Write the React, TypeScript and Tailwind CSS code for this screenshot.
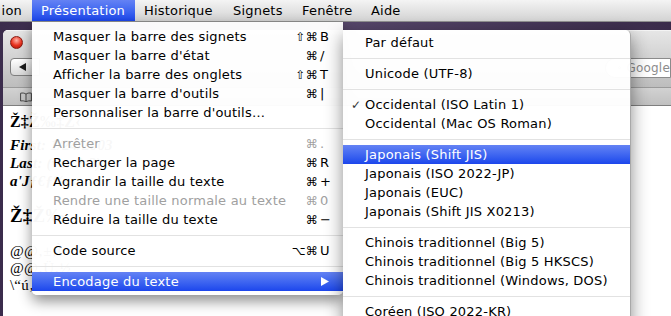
import React from "react";

type Row =
  | { label: string; mods?: string; k?: string; disabled?: boolean; sub?: boolean; active?: boolean; check?: boolean }
  | "sep";

const mainItems: Row[] = [
  { label: "Masquer la barre des signets", mods: "⇧⌘", k: "B" },
  { label: "Masquer la barre d'état", mods: "⌘", k: "/" },
  { label: "Afficher la barre des onglets", mods: "⇧⌘", k: "T" },
  { label: "Masquer la barre d'outils", mods: "⌘", k: "|" },
  { label: "Personnaliser la barre d'outils…" },
  "sep",
  { label: "Arrêter", mods: "⌘", k: ".", disabled: true },
  { label: "Recharger la page", mods: "⌘", k: "R" },
  { label: "Agrandir la taille du texte", mods: "⌘", k: "+" },
  { label: "Rendre une taille normale au texte", mods: "⌘", k: "0", disabled: true },
  { label: "Réduire la taille du texte", mods: "⌘", k: "−" },
  "sep",
  { label: "Code source", mods: "⌥⌘", k: "U" },
  "sep",
  { label: "Encodage du texte", sub: true, active: true },
];

const subItems: Row[] = [
  { label: "Par défaut" },
  "sep",
  { label: "Unicode (UTF-8)" },
  "sep",
  { label: "Occidental (ISO Latin 1)", check: true },
  { label: "Occidental (Mac OS Roman)" },
  "sep",
  { label: "Japonais (Shift JIS)", active: true },
  { label: "Japonais (ISO 2022-JP)" },
  { label: "Japonais (EUC)" },
  { label: "Japonais (Shift JIS X0213)" },
  "sep",
  { label: "Chinois traditionnel (Big 5)" },
  { label: "Chinois traditionnel (Big 5 HKSCS)" },
  { label: "Chinois traditionnel (Windows, DOS)" },
  "sep",
  { label: "Coréen (ISO 2022-KR)" },
];

const highlight = "bg-gradient-to-b from-[#6482f4] to-[#1c45ec] text-white";

function Separator() {
  return (
    <div className="h-[12px] flex items-center">
      <div className="h-px w-full bg-[#e2e2e2]" />
    </div>
  );
}

function MenuBar() {
  const titles = [
    { t: "Historique", w: "w-[89px]" },
    { t: "Signets", w: "w-[69px]" },
    { t: "Fenêtre", w: "w-[69px]" },
    { t: "Aide", w: "w-[60px]" },
  ];
  return (
    <div className="h-[22px] flex items-stretch bg-gradient-to-b from-[#f4f4f4] to-[#d3d3d3] border-b border-[#8f8f8f]">
      <div className="w-[32px] flex items-center justify-end pr-[10px]">ion</div>
      <div className={`w-[103px] flex items-center pl-[9px] ${highlight}`}>Présentation</div>
      {titles.map((m) => (
        <div key={m.t} className={`${m.w} flex items-center pl-[9px]`}>
          {m.t}
        </div>
      ))}
    </div>
  );
}

function Window() {
  return (
    <div className="flex-1 pl-[3px] pt-[8px] bg-gradient-to-r from-[#3b2c4c] via-[#58486c] to-[#3a2b4a]">
      <div className="h-full flex flex-col bg-white rounded-tl-[5px] overflow-hidden">
        <div className="h-[57px] flex flex-col bg-gradient-to-b from-[#e6e6e6] to-[#bdbdbd] border-t border-[#f4f4f4]">
          <div className="h-[23px] flex items-center pl-[7px]">
            <div className="w-[13px] h-[13px] rounded-full border border-[#8a1b12] bg-[radial-gradient(circle_at_50%_30%,#ffb3a8,#e8321f_55%,#a0140a)]" />
          </div>
          <div className="flex items-start pt-[4px] pl-[7px]">
            <div className="w-[30px] h-[18px] rounded-l-[4px] border border-[#7f7f7f] bg-gradient-to-b from-[#ffffff] to-[#d8d8d8] flex items-center pl-[8px]">
              <svg width="7" height="8" viewBox="0 0 7 8">
                <polygon points="0,4 7,0 7,8" fill="#1a1a1a" />
              </svg>
            </div>
            <div className="ml-auto w-[66px] h-[20px] rounded-l-full border border-[#8b8b8b] bg-white flex items-center pl-[12px] gap-[5px] text-[12px] text-[#8c8c8c]">
              <svg width="10" height="10" viewBox="0 0 10 10" fill="none" stroke="#777" strokeWidth="1.4">
                <circle cx="4" cy="4" r="3" />
                <path d="M6.2 6.2 9 9" />
              </svg>
              <span>Google</span>
            </div>
          </div>
        </div>
        <div className="h-[19px] flex items-center pl-[17px] bg-gradient-to-b from-[#d2d2d2] to-[#c0c0c0] border-t border-[#9a9a9a] border-b border-b-[#7e7e7e]">
          <svg width="12" height="10" viewBox="0 0 12 10" fill="none" stroke="#444" strokeWidth="1">
            <path d="M6 2.2C4.6 1 2.6.8.6 1.2V9c2-.4 4-.2 5.4 1 1.4-1.2 3.4-1.4 5.4-1V1.2C9.4.8 7.4 1 6 2.2Z" />
            <path d="M6 2.2V10" />
          </svg>
        </div>
        <div className="flex-1 pl-[7px] pt-[6px] font-['Liberation_Serif',serif] text-black whitespace-nowrap">
          <div className="text-[16px] leading-[20px] font-bold">Ž‡Ž‰‡Ž‹</div>
          <div className="mt-[4px] text-[15px] leading-[18px] italic font-bold">
            <div>First: 1/24/2003</div>
            <div>Last: (ver 2-3)</div>
            <div>a'Jƒ€ƒ‰</div>
          </div>
          <div className="mt-[14px] text-[19px] leading-[24px] font-bold">Ž‡Ž‰</div>
          <div className="mt-[15px] text-[15px] leading-[17px]">
            <div>@@‚±‚Ì</div>
            <div>@@‚Ü‚½</div>
            <div>\“ú‚,‚,‚,‚,‚,‚,‚,‚,‚,‚,‚,‚,‚,‚,‚,‚,‚,‚,‚,</div>
          </div>
        </div>
      </div>
    </div>
  );
}

function MainMenu() {
  return (
    <div className="absolute left-[32px] top-[22px] w-[311px] pt-[5px] pb-[4px] bg-white/[0.97] rounded-b-[5px] shadow-[0_6px_14px_rgba(0,0,0,0.45)]">
      {mainItems.map((it, i) =>
        it === "sep" ? (
          <Separator key={i} />
        ) : (
          <div
            key={i}
            className={`h-[19px] flex items-center pl-[21px] pr-[13px] ${it.active ? highlight : ""} ${
              it.disabled ? "text-[#a0a0a0]" : ""
            }`}
          >
            <span className="flex-1">{it.label}</span>
            {it.k && (
              <span className="flex items-center">
                <span className="text-[12px]">{it.mods}</span>
                <span className="w-[12px] pl-[2px]">{it.k}</span>
              </span>
            )}
            {it.sub && (
              <svg width="8" height="9" viewBox="0 0 8 9" className="mr-[1px]">
                <polygon points="0,0 8,4.5 0,9" fill="#ffffff" />
              </svg>
            )}
          </div>
        )
      )}
    </div>
  );
}

function SubMenu() {
  return (
    <div className="absolute left-[343px] top-[30px] w-[288px] h-[300px] pt-[3px] bg-white/[0.97] rounded-tr-[5px] border-r border-[#a8a8a8] shadow-[0_6px_18px_rgba(0,0,0,0.45)]">
      {subItems.map((it, i) =>
        it === "sep" ? (
          <Separator key={i} />
        ) : (
          <div key={i} className={`h-[19px] flex items-center pl-[8px] ${it.active ? highlight : ""}`}>
            <span className="w-[14px] text-[12px] text-[#333]">{it.check ? "✓" : ""}</span>
            <span>{it.label}</span>
          </div>
        )
      )}
    </div>
  );
}

export default function App() {
  return (
    <div className="relative w-[671px] h-[316px] overflow-hidden flex flex-col font-['DejaVu_Sans',sans-serif] text-[13px] tracking-[0.2px] text-black">
      <MenuBar />
      <Window />
      <MainMenu />
      <SubMenu />
    </div>
  );
}
